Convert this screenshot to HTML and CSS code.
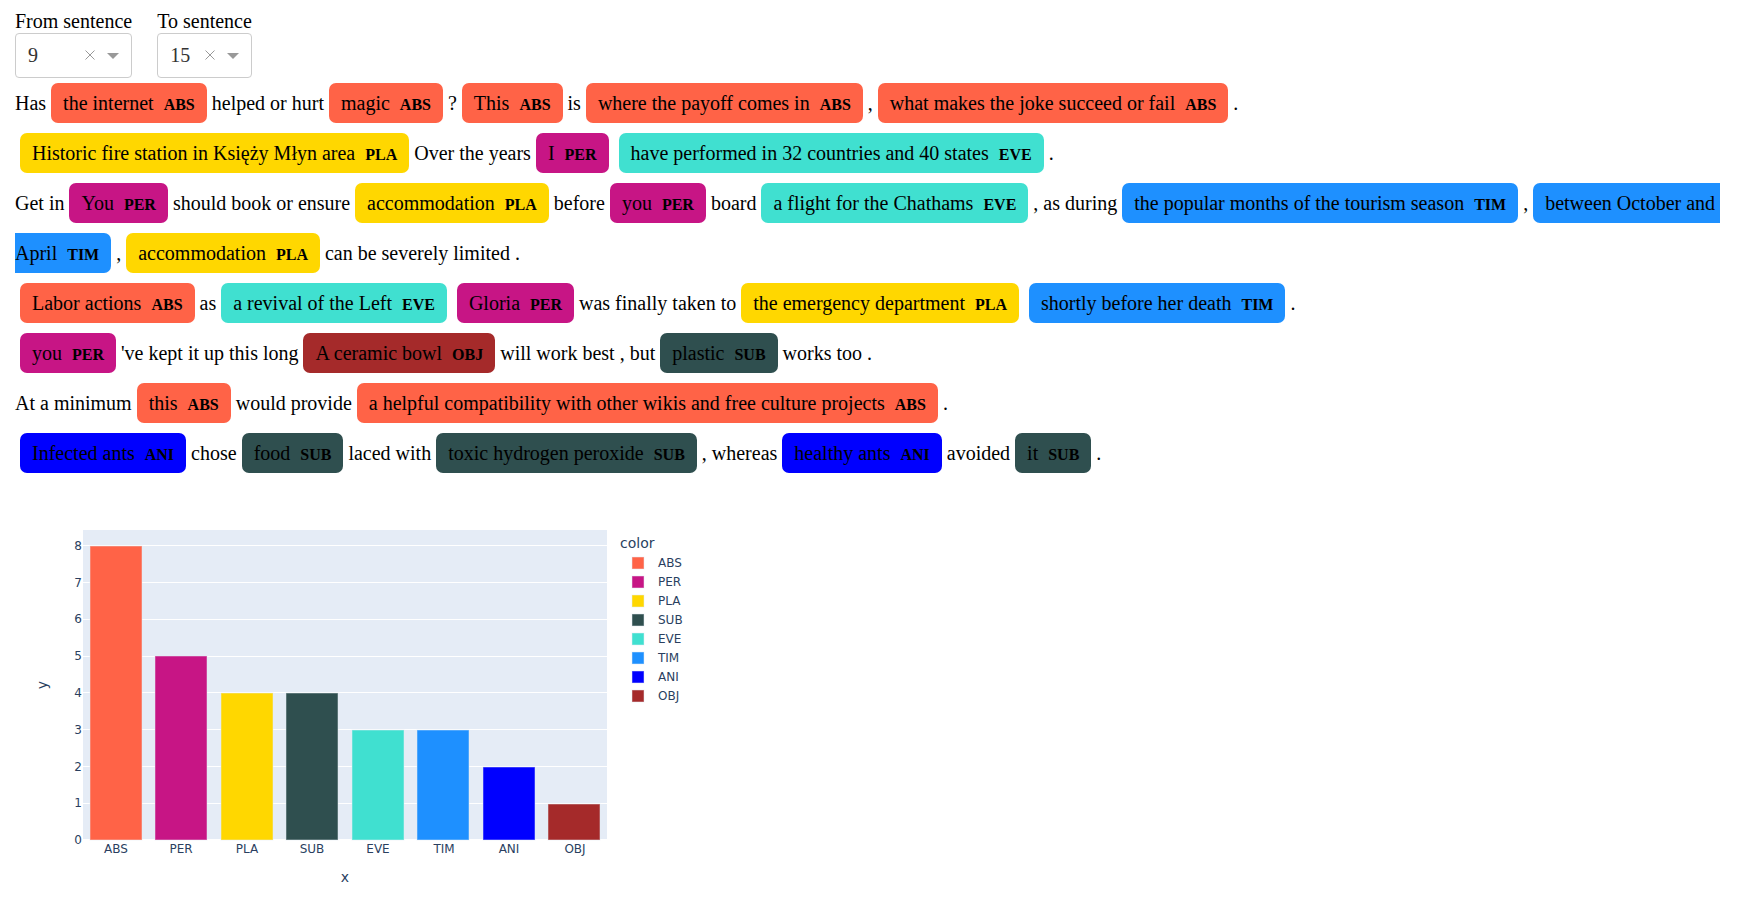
FILE: index.html
```html
<!DOCTYPE html>
<html lang="en">
<head>
<meta charset="utf-8">
<title>Annotated sentences</title>
<link rel="stylesheet" href="styles.css">
</head>
<body>
<form class="filters">
  <div class="field">
    <label for="from">From sentence</label>
    <div class="dropdown">
      <select id="from"><option>9</option></select>
      <button type="button" class="clear" aria-label="Clear from sentence"><svg width="10" height="10" viewBox="0 0 10 10"><path d="M0.5 0.5L9.5 9.5M9.5 0.5L0.5 9.5"/></svg></button>
      <svg class="arrow" width="12" height="6" viewBox="0 0 12 6"><path d="M0 0H12L6 6Z"/></svg>
    </div>
  </div>
  <div class="field">
    <label for="to">To sentence</label>
    <div class="dropdown">
      <select id="to"><option>15</option></select>
      <button type="button" class="clear" aria-label="Clear to sentence"><svg width="10" height="10" viewBox="0 0 10 10"><path d="M0.5 0.5L9.5 9.5M9.5 0.5L0.5 9.5"/></svg></button>
      <svg class="arrow" width="12" height="6" viewBox="0 0 12 6"><path d="M0 0H12L6 6Z"/></svg>
    </div>
  </div>
</form>
<main>
<div class="sentence">Has<mark class="abs">the internet<b>ABS</b></mark>helped or hurt<mark class="abs">magic<b>ABS</b></mark>?<mark class="abs">This<b>ABS</b></mark>is<mark class="abs">where the payoff comes in<b>ABS</b></mark>,<mark class="abs">what makes the joke succeed or fail<b>ABS</b></mark>.</div>
<div class="sentence"><mark class="pla">Historic fire station in Księży Młyn area<b>PLA</b></mark>Over the years<mark class="per">I<b>PER</b></mark><mark class="eve">have performed in 32 countries and 40 states<b>EVE</b></mark>.</div>
<div class="sentence">Get in<mark class="per">You<b>PER</b></mark>should book or ensure<mark class="pla">accommodation<b>PLA</b></mark>before<mark class="per">you<b>PER</b></mark>board<mark class="eve">a flight for the Chathams<b>EVE</b></mark>, as during<mark class="tim">the popular months of the tourism season<b>TIM</b></mark>,<mark class="tim">between October and&nbsp;<wbr>April<b>TIM</b></mark>,<mark class="pla">accommodation<b>PLA</b></mark>can be severely limited .</div>
<div class="sentence"><mark class="abs">Labor actions<b>ABS</b></mark>as<mark class="eve">a revival of the Left<b>EVE</b></mark><mark class="per">Gloria<b>PER</b></mark>was finally taken to<mark class="pla">the emergency department<b>PLA</b></mark><mark class="tim">shortly before her death<b>TIM</b></mark>.</div>
<div class="sentence"><mark class="per">you<b>PER</b></mark>'ve kept it up this long<mark class="obj">A ceramic bowl<b>OBJ</b></mark>will work best , but<mark class="sub">plastic<b>SUB</b></mark>works too .</div>
<div class="sentence">At a minimum<mark class="abs">this<b>ABS</b></mark>would provide<mark class="abs">a helpful compatibility with other wikis and free culture projects<b>ABS</b></mark>.</div>
<div class="sentence"><mark class="ani">Infected ants<b>ANI</b></mark>chose<mark class="sub">food<b>SUB</b></mark>laced with<mark class="sub">toxic hydrogen peroxide<b>SUB</b></mark>, whereas<mark class="ani">healthy ants<b>ANI</b></mark>avoided<mark class="sub">it<b>SUB</b></mark>.</div>
<svg class="chart" width="700" height="420" viewBox="0 0 700 420" role="img" aria-label="Entity counts by label">
  <rect class="plot" x="68" y="52" width="524" height="310"/>
  <g class="grid">
    <rect x="68" y="67" width="524" height="1"/><rect x="68" y="104" width="524" height="1"/>
    <rect x="68" y="141" width="524" height="1"/><rect x="68" y="178" width="524" height="1"/>
    <rect x="68" y="214" width="524" height="1"/><rect x="68" y="251" width="524" height="1"/>
    <rect x="68" y="288" width="524" height="1"/><rect x="68" y="325" width="524" height="1"/>
    <rect x="68" y="361" width="524" height="1"/>
  </g>
  <g class="bars">
    <rect class="abs" x="75" y="68" width="52" height="294"/>
    <rect class="per" x="140" y="178" width="52" height="184"/>
    <rect class="pla" x="206" y="215" width="52" height="147"/>
    <rect class="sub" x="271" y="215" width="52" height="147"/>
    <rect class="eve" x="337" y="252" width="52" height="110"/>
    <rect class="tim" x="402" y="252" width="52" height="110"/>
    <rect class="ani" x="468" y="289" width="52" height="73"/>
    <rect class="obj" x="533" y="326" width="52" height="36"/>
  </g>
  <g class="tick-y">
    <text x="67" y="72">8</text><text x="67" y="109">7</text><text x="67" y="145">6</text>
    <text x="67" y="182">5</text><text x="67" y="219">4</text><text x="67" y="256">3</text>
    <text x="67" y="293">2</text><text x="67" y="329">1</text><text x="67" y="366">0</text>
  </g>
  <g class="tick-x">
    <text x="101" y="375">ABS</text><text x="166" y="375">PER</text><text x="232" y="375">PLA</text>
    <text x="297" y="375">SUB</text><text x="363" y="375">EVE</text><text x="429" y="375">TIM</text>
    <text x="494" y="375">ANI</text><text x="560" y="375">OBJ</text>
  </g>
  <text class="title" x="330" y="404">x</text>
  <text class="title" transform="translate(32 207) rotate(-90)">y</text>
  <text class="legend-title" x="605" y="70">color</text>
  <g class="bars">
    <rect class="abs" x="617" y="79" width="12" height="12"/>
    <rect class="per" x="617" y="98" width="12" height="12"/>
    <rect class="pla" x="617" y="117" width="12" height="12"/>
    <rect class="sub" x="617" y="136" width="12" height="12"/>
    <rect class="eve" x="617" y="155" width="12" height="12"/>
    <rect class="tim" x="617" y="174" width="12" height="12"/>
    <rect class="ani" x="617" y="193" width="12" height="12"/>
    <rect class="obj" x="617" y="212" width="12" height="12"/>
  </g>
  <g>
    <text x="643" y="89">ABS</text><text x="643" y="108">PER</text><text x="643" y="127">PLA</text>
    <text x="643" y="146">SUB</text><text x="643" y="165">EVE</text><text x="643" y="184">TIM</text>
    <text x="643" y="203">ANI</text><text x="643" y="222">OBJ</text>
  </g>
</svg>
</main>
</body>
</html>
```
FILE: styles.css
```css
body {
  margin: 0;
  padding: 10px 15px 0;
  background: #fff;
  color: #000;
  font-family: "Liberation Serif", "Times New Roman", serif;
  font-size: 20px;
}

.filters {
  display: flex;
  gap: 25px;
}

.field label {
  display: block;
  line-height: 23px;
}

.dropdown {
  display: flex;
  align-items: center;
  box-sizing: border-box;
  height: 45px;
  padding: 0 12px 2px 0;
  border: 1px solid #ccc;
  border-radius: 4px;
}

.dropdown select {
  flex: 1;
  min-width: 0;
  width: 0;
  height: 100%;
  padding: 0 0 0 12px;
  border: 0;
  background: none;
  color: #333;
  font: inherit;
  appearance: none;
}

.clear {
  display: flex;
  padding: 0;
  border: 0;
  margin-right: 12px;
  background: none;
}

.clear path {
  fill: none;
  stroke: #999;
}

.arrow {
  margin-top: 2px;
  fill: #999;
}

.sentence {
  line-height: 50px;
}

mark {
  margin: 0 5px;
  padding: 9px 12px;
  border-radius: 7px;
  color: inherit;
  line-height: 1;
}

mark b {
  margin-left: 10px;
  font-size: 16px;
  line-height: 1;
  vertical-align: middle;
}

.abs { background: #ff6347; fill: #ff6347; }
.per { background: #c71585; fill: #c71585; }
.pla { background: #ffd700; fill: #ffd700; }
.sub { background: #2f4f4f; fill: #2f4f4f; }
.eve { background: #40e0d0; fill: #40e0d0; }
.tim { background: #1e90ff; fill: #1e90ff; }
.ani { background: #0000ff; fill: #0000ff; }
.obj { background: #a52a2a; fill: #a52a2a; }

.chart {
  display: block;
  font-family: "DejaVu Sans", Verdana, sans-serif;
  font-size: 12px;
}

.chart text { fill: #2a3f5f; }
.plot { fill: #e5ecf6; }
.grid { fill: #fff; }
.bars rect { stroke: #e5ecf6; stroke-opacity: 0.5; }
.tick-y { text-anchor: end; }
.tick-x { text-anchor: middle; }
.title { font-size: 14px; text-anchor: middle; }
.legend-title { font-size: 14px; }
```
